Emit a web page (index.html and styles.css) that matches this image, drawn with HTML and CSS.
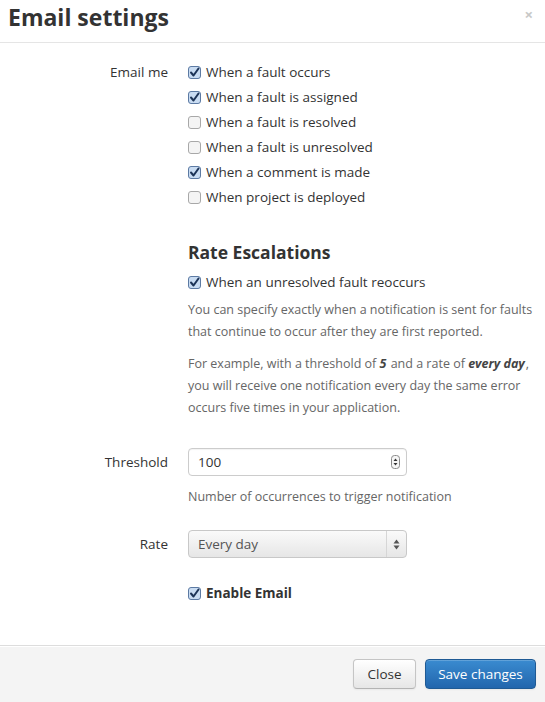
FILE: index.html
```html
<!DOCTYPE html>
<html>
<head>
<meta charset="utf-8">
<link rel="stylesheet" href="styles.css">
</head>
<body>
<div class="modal">
  <div class="modal-header">
    <h3 class="title">Email settings</h3>
    <span class="close">×</span>
  </div>
  <div class="modal-body">
    <div class="row">
      <div class="label">Email me</div>
      <div class="controls">
        <div class="check"><svg class="cb on" width="13" height="13" viewBox="0 0 13 13"><rect x="0.5" y="0.5" width="12" height="12" rx="2.5"/><path d="M3 6.5 L5.5 9.5 L10.5 2.5"/></svg><span>When a fault occurs</span></div>
        <div class="check"><svg class="cb on" width="13" height="13" viewBox="0 0 13 13"><rect x="0.5" y="0.5" width="12" height="12" rx="2.5"/><path d="M3 6.5 L5.5 9.5 L10.5 2.5"/></svg><span>When a fault is assigned</span></div>
        <div class="check"><svg class="cb off" width="13" height="13" viewBox="0 0 13 13"><rect x="0.5" y="0.5" width="12" height="12" rx="2.5"/></svg><span>When a fault is resolved</span></div>
        <div class="check"><svg class="cb off" width="13" height="13" viewBox="0 0 13 13"><rect x="0.5" y="0.5" width="12" height="12" rx="2.5"/></svg><span>When a fault is unresolved</span></div>
        <div class="check"><svg class="cb on" width="13" height="13" viewBox="0 0 13 13"><rect x="0.5" y="0.5" width="12" height="12" rx="2.5"/><path d="M3 6.5 L5.5 9.5 L10.5 2.5"/></svg><span>When a comment is made</span></div>
        <div class="check"><svg class="cb off" width="13" height="13" viewBox="0 0 13 13"><rect x="0.5" y="0.5" width="12" height="12" rx="2.5"/></svg><span>When project is deployed</span></div>
      </div>
    </div>

    <div class="row section">
      <div class="label"></div>
      <div class="controls">
        <h4 class="subtitle">Rate Escalations</h4>
        <div class="check"><svg class="cb on" width="13" height="13" viewBox="0 0 13 13"><rect x="0.5" y="0.5" width="12" height="12" rx="2.5"/><path d="M3 6.5 L5.5 9.5 L10.5 2.5"/></svg><span>When an unresolved fault reoccurs</span></div>
        <p class="desc first">You can specify exactly when a notification is sent for faults that continue to occur after they are first reported.</p>
        <p class="desc">For example, with a threshold of <b><i>5</i></b> and a rate of <b><i>every day</i></b>, you will receive one notification every day the same error occurs five times in your application.</p>
      </div>
    </div>

    <div class="row field threshold">
      <div class="label">Threshold</div>
      <div class="controls">
        <div class="input"><span>100</span>
          <svg class="spin" width="9" height="14" viewBox="0 0 9 14"><rect x="0.5" y="0.5" width="8" height="13" rx="3"/><path class="arr" d="M2.5 6 L4.5 3.5 L6.5 6 Z M2.5 8 L4.5 10.5 L6.5 8 Z"/></svg>
        </div>
        <div class="help">Number of occurrences to trigger notification</div>
      </div>
    </div>

    <div class="row field rate">
      <div class="label">Rate</div>
      <div class="controls">
        <div class="select"><span>Every day</span>
          <span class="sel-btn"><svg width="7" height="11" viewBox="0 0 7 11"><path d="M0.5 4.5 L3.5 0.5 L6.5 4.5 Z M0.5 6.5 L3.5 10.5 L6.5 6.5 Z"/></svg></span>
        </div>
      </div>
    </div>

    <div class="row enable">
      <div class="label"></div>
      <div class="controls">
        <div class="check strong"><svg class="cb on" width="13" height="13" viewBox="0 0 13 13"><rect x="0.5" y="0.5" width="12" height="12" rx="2.5"/><path d="M3 6.5 L5.5 9.5 L10.5 2.5"/></svg><span>Enable Email</span></div>
      </div>
    </div>
  </div>
  <div class="modal-footer">
    <button class="btn">Close</button>
    <button class="btn primary">Save changes</button>
  </div>
</div>
</body>
</html>
```
FILE: styles.css
```css
* { box-sizing: border-box; }
html, body { margin: 0; padding: 0; background: #fff; }
body {
  font-family: "Open Sans", "DejaVu Sans", sans-serif;
  color: #333;
  font-size: 13px;
  width: 545px;
  height: 702px;
  overflow: hidden;
}
.modal { width: 545px; height: 702px; display: flex; flex-direction: column; }
.modal-header {
  height: 43px;
  border-bottom: 1px solid #e5e5e5;
  display: flex;
  align-items: flex-start;
  justify-content: space-between;
  padding: 0 12px 0 8px;
}
.title {
  margin: 0;
  font-size: 23px;
  font-weight: 700;
  line-height: 35px;
  color: #333;
}
.close {
  font-size: 15px;
  font-weight: 700;
  color: #c8c8c8;
  line-height: 28px;
}
.modal-body { flex: 1; padding-top: 17px; }
.row { display: grid; grid-template-columns: 168px 1fr; column-gap: 20px; }
.label { text-align: right; line-height: 25px; font-size: 13.5px; }
.controls { min-width: 0; }
.check { display: flex; align-items: center; height: 25px; line-height: 25px; }
.check span { margin-left: 5px; font-size: 13.5px; }
.cb { flex: none; }
.cb.on rect { fill: #c9dcf2; stroke: #5c7aa3; stroke-width: 1; }
.cb.on path { fill: none; stroke: #1d3457; stroke-width: 2; stroke-linecap: round; stroke-linejoin: round; }
.cb.off rect { fill: #f4f4f4; stroke: #a8a8a8; stroke-width: 1; }
.section { margin-top: 30px; }
.subtitle { margin: 0 0 5px; font-size: 17.5px; font-weight: 700; line-height: 25px; color: #333; }
.check + .desc.first { margin-top: 4px; }
.desc {
  margin: 0 0 10px;
  font-size: 12.5px;
  line-height: 22px;
  color: #666;
  padding-right: 8px;
}
.desc b { color: #444; padding-right: 1px; }
.field .label { line-height: 28px; }
.threshold { margin-top: 19px; }
.input {
  width: 219px; height: 28px;
  border: 1px solid #ccc;
  border-radius: 4px;
  background: #fff;
  display: flex; align-items: center; justify-content: space-between;
  padding: 0 6px 0 9px;
  font-size: 13.5px;
  box-shadow: inset 0 1px 1px rgba(0,0,0,0.05);
}
.spin rect { fill: #f6f6f6; stroke: #8a8a8a; }
.spin .arr { fill: #333; stroke: none; }
.help { margin-top: 10px; line-height: 22px; font-size: 12.5px; color: #666; }
.rate { margin-top: 22px; }
.select {
  width: 219px; height: 28px;
  border: 1px solid #c8c8c8;
  border-radius: 4px;
  background: linear-gradient(#fafafa, #e6e6e6);
  display: flex; align-items: center; justify-content: space-between;
  padding-left: 9px;
  font-size: 13.5px;
  color: #555;
}
.sel-btn {
  width: 20px; height: 100%;
  border-left: 1px solid #d6d6d6;
  display: flex; align-items: center; justify-content: center;
}
.sel-btn path { fill: #555; }
.enable { margin-top: 23px; }
.strong span { font-weight: 700; }
.modal-footer {
  height: 57px;
  border-top: 1px solid #ddd;
  background: #f4f4f4;
  display: flex;
  justify-content: flex-end;
  align-items: flex-start;
  padding: 13px 9px 0 0;
  gap: 9px;
  box-shadow: inset 0 1px 0 #fff;
}
.btn {
  font-family: "Open Sans", "DejaVu Sans", sans-serif;
  font-size: 13.5px;
  height: 30px;
  padding: 0 12px;
  border-radius: 4px;
  border: 1px solid #c5c5c5;
  border-bottom-color: #b3b3b3;
  background: linear-gradient(#ffffff, #e6e6e6);
  color: #333;
  box-shadow: inset 0 1px 0 rgba(255,255,255,0.2), 0 1px 2px rgba(0,0,0,0.05);
}
.btn.primary {
  width: 111px;
  color: #fff;
  border-color: #1f5a94;
  background: linear-gradient(#3a8bd0, #2266ad);
}
.btn:first-child { width: 63px; }
```
